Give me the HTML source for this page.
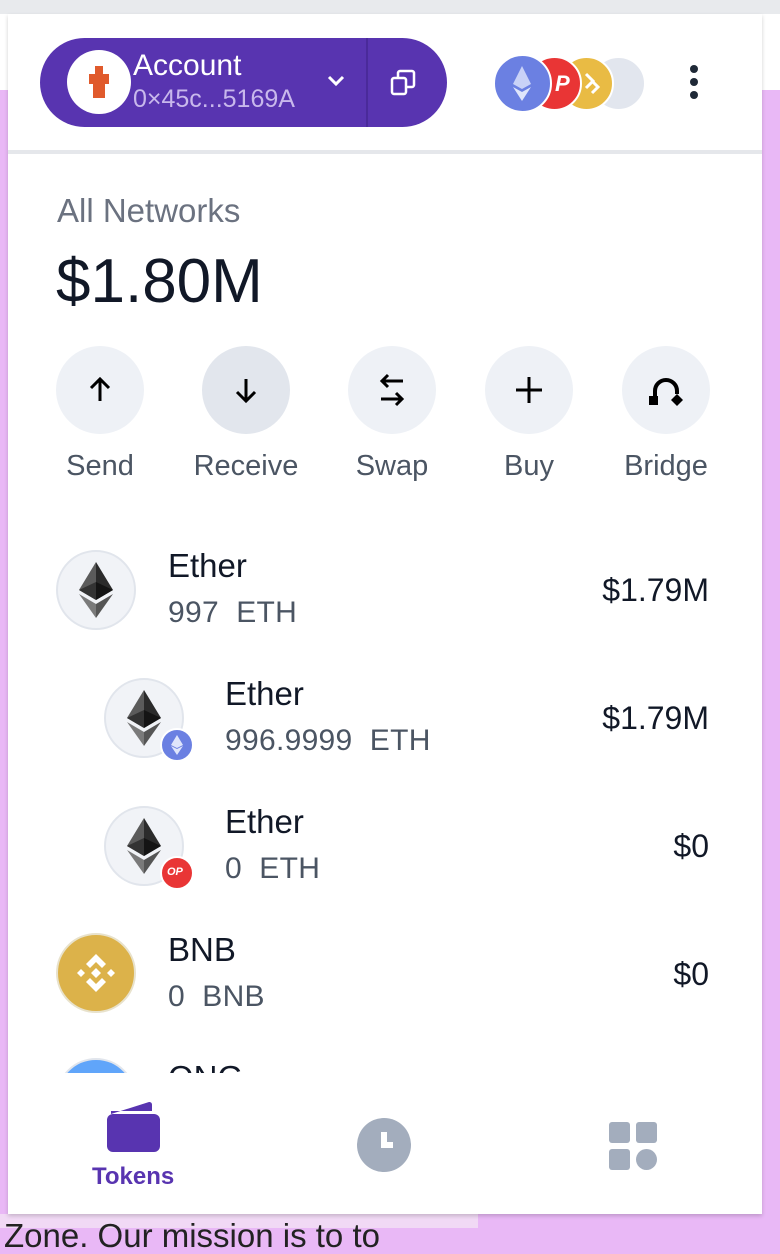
<!DOCTYPE html>
<html><head><meta charset="utf-8"><style>
*{margin:0;padding:0;box-sizing:border-box}
body{width:780px;height:1228px;overflow:hidden;background:#e9b8f6;font-family:"Liberation Sans",Arial,sans-serif;position:relative}
.abs{position:absolute}
.top{left:0;top:0;width:780px;height:90px;background:#fff}
.topbar{left:0;top:0;width:780px;height:14px;background:#e8eaed}
.panel{left:8px;top:14px;width:754px;height:1200px;background:#fff;box-shadow:0 2px 4px rgba(0,0,0,.18);overflow:hidden}
.t{position:absolute;white-space:nowrap;line-height:1}
.circ{position:absolute;border-radius:50%}
.lbl{font-size:29px;color:#4b5563;text-align:center;width:140px}
.name{font-size:33px;color:#111827}
.amt{font-size:30px;color:#4b5563;letter-spacing:.3px}
.val{font-size:32px;color:#111827;right:53px;text-align:right}
.tokic{width:80px;height:80px;background:#f1f3f7;border:2px solid #e1e5ec}
</style></head><body>
<div class="abs top"></div>
<div class="abs topbar"></div>
<div class="abs" style="left:0;top:1214px;width:478px;height:14px;background:#f1d9f5"></div>
<div class="t" style="left:4px;top:1219px;font-size:33px;color:#222">Zone. Our mission is to to</div>
<div class="abs panel">
 <div class="abs" style="left:32px;top:24px;width:407px;height:89px;border-radius:45px;background:#5834b0"></div>
 <div class="abs" style="left:358px;top:24px;width:2px;height:89px;background:#4a2a9a"></div>
 <div class="circ" style="left:59px;top:36px;width:64px;height:64px;background:#fff"></div>
 <svg class="abs" style="left:67px;top:46px" width="48" height="48" viewBox="0 0 48 48"><path d="M20 6h8v8h6v10h-4v14H18V24h-4V14h6z" fill="#e05a2c"/></svg>
 <div class="t" style="left:125px;top:37px;font-size:30px;color:#fff">Account</div>
 <div class="t" style="left:125px;top:73px;font-size:25px;color:#c8b8ec">0×45c...5169A</div>
 <svg class="abs" style="left:318px;top:59px" width="20" height="16" viewBox="0 0 20 16"><path d="M3 4l7 7 7-7" stroke="#fff" stroke-width="3" fill="none"/></svg>
 <svg class="abs" style="left:381px;top:55px" width="28" height="28" viewBox="0 0 28 28"><rect x="9" y="2" width="16" height="16" rx="2" stroke="#fff" stroke-width="2.5" fill="none"/><rect x="3" y="9" width="14" height="16" rx="2" stroke="#fff" stroke-width="2.5" fill="#5834b0"/></svg>
 <div class="circ" style="left:583px;top:42px;width:55px;height:55px;background:#e2e6ee;border:2px solid #fff"></div>
 <div class="circ" style="left:551px;top:42px;width:55px;height:55px;background:#e9bb44;border:2px solid #fff"></div>
 <svg class="abs" style="left:570px;top:55px" width="30" height="30" viewBox="0 0 30 30"><path d="M8 5l7 7-7 7M14 12l6 6-6 6" stroke="#fff" stroke-width="3" fill="none"/></svg>
 <div class="circ" style="left:519px;top:42px;width:55px;height:55px;background:#e93535;border:2px solid #fff"></div>
 <div class="t" style="left:547px;top:59px;font-size:22px;font-weight:bold;font-style:italic;color:#fff">P</div>
 <div class="circ" style="left:485px;top:40px;width:59px;height:59px;background:#6b80e2;border:2px solid #fff"></div>
 <svg class="abs" style="left:502px;top:50px" width="24" height="40" viewBox="0 0 24 40"><path d="M12 2L3 20l9 5 9-5z" fill="#c9d2f7"/><path d="M12 28l-9-5 9 14 9-14z" fill="#dfe5fb"/></svg>
 <div class="circ" style="left:682px;top:51px;width:8px;height:8px;background:#1f2937"></div>
 <div class="circ" style="left:682px;top:64px;width:8px;height:8px;background:#1f2937"></div>
 <div class="circ" style="left:682px;top:77px;width:8px;height:8px;background:#1f2937"></div>
 <div class="abs" style="left:0;top:136px;width:754px;height:4px;background:#e5e7eb"></div>
 <div class="t" style="left:49px;top:180px;font-size:33px;color:#6b7280">All Networks</div>
 <div class="t" style="left:48px;top:237px;font-size:62px;color:#111827">$1.80M</div>
 <div class="circ" style="left:48px;top:332px;width:88px;height:88px;background:#eef1f6"></div>
 <div class="circ" style="left:194px;top:332px;width:88px;height:88px;background:#e2e6ed"></div>
 <div class="circ" style="left:340px;top:332px;width:88px;height:88px;background:#eef1f6"></div>
 <div class="circ" style="left:477px;top:332px;width:88px;height:88px;background:#eef1f6"></div>
 <div class="circ" style="left:614px;top:332px;width:88px;height:88px;background:#eef1f6"></div>
 <svg class="abs" style="left:76px;top:360px" width="32" height="32" viewBox="0 0 32 32"><path d="M16 27V6M7 14l9-9 9 9" stroke="#000" stroke-width="3" fill="none"/></svg>
 <svg class="abs" style="left:222px;top:360px" width="32" height="32" viewBox="0 0 32 32"><path d="M16 5v21M7 18l9 9 9-9" stroke="#000" stroke-width="3" fill="none"/></svg>
 <svg class="abs" style="left:368px;top:358px" width="32" height="36" viewBox="0 0 32 36"><path d="M27 9H6M12 3L6 9l6 6M5 27h21M20 21l6 6-6 6" stroke="#000" stroke-width="3" fill="none"/></svg>
 <svg class="abs" style="left:505px;top:360px" width="32" height="32" viewBox="0 0 32 32"><path d="M16 3v26M3 16h26" stroke="#000" stroke-width="3" fill="none"/></svg>
 <svg class="abs" style="left:640px;top:360px" width="36" height="34" viewBox="0 0 36 34"><path d="M7 23v-6a11 11 0 0 1 22 0v3" stroke="#000" stroke-width="4" fill="none"/><rect x="1" y="22" width="9" height="9" fill="#000"/><path d="M29 20l6 6-6 6-6-6z" fill="#000"/></svg>
 <div class="t lbl" style="left:22px;top:438px">Send</div>
 <div class="t lbl" style="left:168px;top:438px">Receive</div>
 <div class="t lbl" style="left:314px;top:438px">Swap</div>
 <div class="t lbl" style="left:451px;top:438px">Buy</div>
 <div class="t lbl" style="left:588px;top:438px">Bridge</div>

 <div class="circ tokic" style="left:48px;top:536px"></div>
 <svg class="abs" style="left:70px;top:548px" width="36" height="56" viewBox="0 0 36 56"><path d="M18 0L1 28l17 10z" fill="#5b5b5b"/><path d="M18 0l17 28-17 10z" fill="#2b2b2b"/><path d="M1 28l17-8v18z" fill="#333"/><path d="M35 28l-17-8v18z" fill="#141414"/><path d="M1 32l17 24V42z" fill="#7a7a7a"/><path d="M35 32L18 56V42z" fill="#555"/></svg>
 <div class="t name" style="left:160px;top:535px">Ether</div>
 <div class="t amt" style="left:160px;top:584px">997&nbsp; ETH</div>
 <div class="t val" style="top:560px">$1.79M</div>

 <div class="circ tokic" style="left:96px;top:664px"></div>
 <svg class="abs" style="left:118px;top:676px" width="36" height="56" viewBox="0 0 36 56"><path d="M18 0L1 28l17 10z" fill="#5b5b5b"/><path d="M18 0l17 28-17 10z" fill="#2b2b2b"/><path d="M1 28l17-8v18z" fill="#333"/><path d="M35 28l-17-8v18z" fill="#141414"/><path d="M1 32l17 24V42z" fill="#7a7a7a"/><path d="M35 32L18 56V42z" fill="#555"/></svg>
 <div class="circ" style="left:152px;top:714px;width:34px;height:34px;background:#6b80e2;border:2px solid #fff"></div>
 <svg class="abs" style="left:162px;top:721px" width="14" height="20" viewBox="0 0 14 20"><path d="M7 0L1 10l6 3 6-3z" fill="#dfe5fb"/><path d="M7 14l-6-3 6 9 6-9z" fill="#dfe5fb"/></svg>
 <div class="t name" style="left:217px;top:663px">Ether</div>
 <div class="t amt" style="left:217px;top:712px">996.9999&nbsp; ETH</div>
 <div class="t val" style="top:688px">$1.79M</div>

 <div class="circ tokic" style="left:96px;top:792px"></div>
 <svg class="abs" style="left:118px;top:804px" width="36" height="56" viewBox="0 0 36 56"><path d="M18 0L1 28l17 10z" fill="#5b5b5b"/><path d="M18 0l17 28-17 10z" fill="#2b2b2b"/><path d="M1 28l17-8v18z" fill="#333"/><path d="M35 28l-17-8v18z" fill="#141414"/><path d="M1 32l17 24V42z" fill="#7a7a7a"/><path d="M35 32L18 56V42z" fill="#555"/></svg>
 <div class="circ" style="left:152px;top:842px;width:34px;height:34px;background:#e93535;border:2px solid #fff"></div>
 <div class="t" style="left:159px;top:853px;font-size:11px;font-weight:bold;font-style:italic;color:#fff">OP</div>
 <div class="t name" style="left:217px;top:791px">Ether</div>
 <div class="t amt" style="left:217px;top:840px">0&nbsp; ETH</div>
 <div class="t val" style="top:816px">$0</div>

 <div class="circ" style="left:48px;top:919px;width:80px;height:80px;background:#dcb24a;border:2px solid #e8e2cc"></div>
 <svg class="abs" style="left:62px;top:933px" width="52" height="52" viewBox="0 0 52 52"><path d="M26 7l10 10-4 4-6-6-6 6-4-4z M26 45l10-10-4-4-6 6-6-6-4 4z M7 26l4-4 4 4-4 4z M45 26l-4-4-4 4 4 4z M26 21l5 5-5 5-5-5z" fill="#fff"/></svg>
 <div class="t name" style="left:160px;top:919px">BNB</div>
 <div class="t amt" style="left:160px;top:968px">0&nbsp; BNB</div>
 <div class="t val" style="top:944px">$0</div>

 <div class="abs" style="left:0;top:1040px;width:754px;height:19px;overflow:hidden">
  <div class="circ" style="left:48px;top:4px;width:80px;height:80px;background:#60a5fa;border:2px solid #e1e5ec"></div>
  <div class="t name" style="left:160px;top:7px">ONG</div>
 </div>
 <svg class="abs" style="left:99px;top:1088px" width="54" height="50" viewBox="0 0 54 50"><path d="M4 12L42 0c2 0 3 1 3 3v6H4z" fill="#5834b0"/><rect x="0" y="12" width="53" height="38" rx="6" fill="#5834b0"/></svg>
 <div class="t" style="left:84px;top:1151px;font-size:24px;font-weight:bold;color:#5834b0">Tokens</div>
 <svg class="abs" style="left:349px;top:1104px" width="54" height="54" viewBox="0 0 54 54"><circle cx="27" cy="27" r="27" fill="#a3adbd"/><path d="M24 14v16h12v-6h-6V14z" fill="#fff"/></svg>
 <svg class="abs" style="left:601px;top:1108px" width="48" height="48" viewBox="0 0 48 48"><rect x="0" y="0" width="21" height="21" rx="3" fill="#a3adbd"/><rect x="27" y="0" width="21" height="21" rx="3" fill="#a3adbd"/><rect x="0" y="27" width="21" height="21" rx="3" fill="#a3adbd"/><ellipse cx="37.5" cy="37.5" rx="10.5" ry="10.5" fill="#a3adbd"/></svg>
</div>
</body></html>
